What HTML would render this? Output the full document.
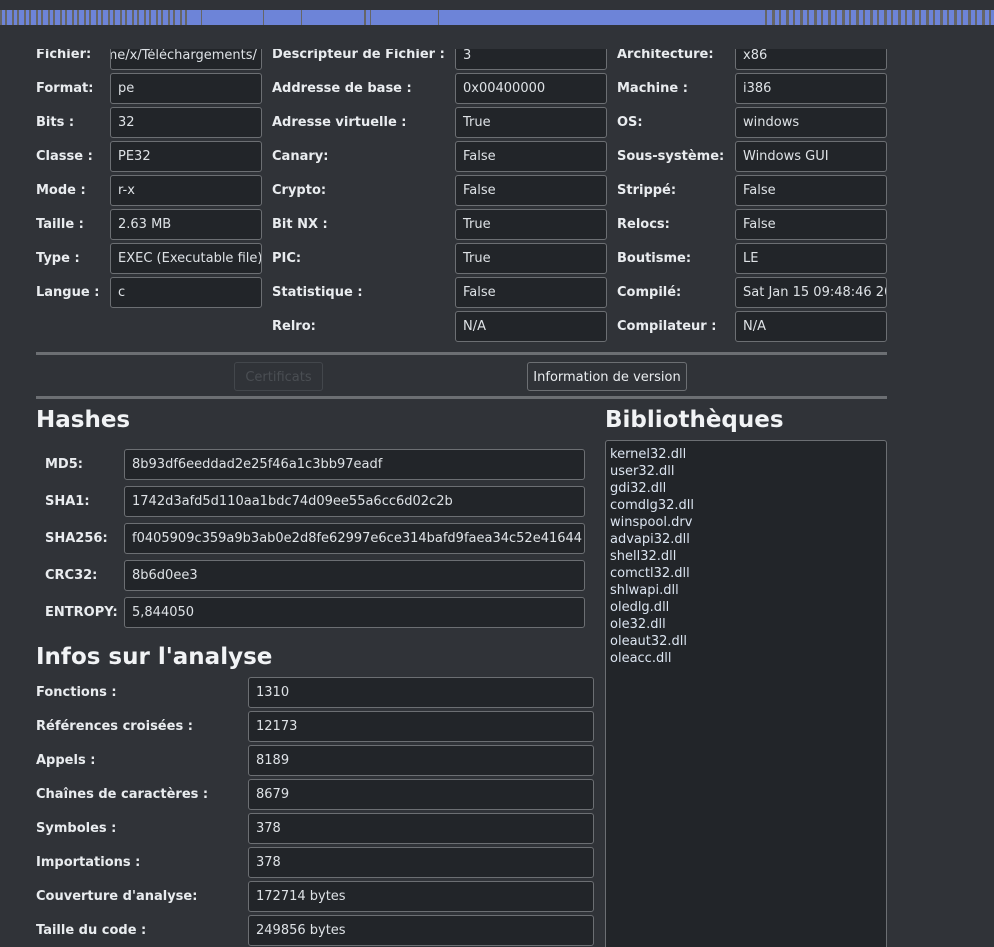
<!DOCTYPE html>
<html><head><meta charset="utf-8"><style>
*{margin:0;padding:0;box-sizing:border-box}
html,body{width:994px;height:947px;overflow:hidden}
body{background:#303338;font-family:"DejaVu Sans","Liberation Sans",sans-serif;font-size:13px;color:#dee2e6;position:relative}
.bar{position:absolute;left:0;top:10px;width:994px;height:15px;background:#6d84d8;z-index:3}
.s{position:absolute;top:10px;height:15px;background:#666;z-index:4}
.cover{position:absolute;left:0;top:0;width:994px;height:49px;background:#303338;z-index:2}
.l{position:absolute;font-weight:bold;color:#e9ecef;white-space:nowrap;line-height:16px}
.i{position:absolute;height:31px;background:#222529;border:1px solid #6c6f73;border-radius:3px;padding:0 7px;line-height:29px;white-space:nowrap;overflow:hidden;color:#dee2e6}
.hr{position:absolute;left:36px;width:851px;height:3px;background:#6c6f73}
.btn{position:absolute;height:29px;border:1px solid #6c6f73;border-radius:3px;line-height:27px;text-align:center;white-space:nowrap}
h2{position:absolute;font-size:23px;font-weight:bold;color:#f1f3f5;white-space:nowrap}
.libs{position:absolute;left:605px;top:440px;width:282px;height:520px;background:#222529;border:1px solid #6c6f73;border-radius:3px;padding:5px 4px;line-height:17px;color:#dbe4f0}
</style></head><body>
<div class="cover"></div>
<div class="bar"></div>
<div class="s" style="left:0;width:190px;background:repeating-linear-gradient(90deg,#666 0 2px,#6d84d8 2px 5px,#666 5px 7px,#6d84d8 7px 12px)"></div>
<div class="s" style="left:201px;width:1px"></div>
<div class="s" style="left:263px;width:1px"></div>
<div class="s" style="left:301px;width:1px"></div>
<div class="s" style="left:364px;width:2px"></div>
<div class="s" style="left:370px;width:1px"></div>
<div class="s" style="left:438px;width:1px"></div>
<div class="s" style="left:765px;width:229px;background:repeating-linear-gradient(90deg,#666 0 2px,#6d84d8 2px 7px,#666 7px 10px,#6d84d8 10px 14px)"></div>

<div class="l" style="left:36px;top:47px">Fichier:</div><div class="i" style="left:110px;top:39px;width:152px;padding-top:1px"><span style="margin-left:-34px">/home/x/Téléchargements/</span></div>
<div class="l" style="left:36px;top:81px">Format:</div><div class="i" style="left:110px;top:73px;width:152px">pe</div>
<div class="l" style="left:36px;top:115px">Bits :</div><div class="i" style="left:110px;top:107px;width:152px">32</div>
<div class="l" style="left:36px;top:149px">Classe :</div><div class="i" style="left:110px;top:141px;width:152px">PE32</div>
<div class="l" style="left:36px;top:183px">Mode :</div><div class="i" style="left:110px;top:175px;width:152px">r-x</div>
<div class="l" style="left:36px;top:217px">Taille :</div><div class="i" style="left:110px;top:209px;width:152px">2.63 MB</div>
<div class="l" style="left:36px;top:251px">Type :</div><div class="i" style="left:110px;top:243px;width:152px">EXEC (Executable file)</div>
<div class="l" style="left:36px;top:285px">Langue :</div><div class="i" style="left:110px;top:277px;width:152px">c</div>

<div class="l" style="left:272px;top:47px">Descripteur de Fichier :</div><div class="i" style="left:455px;top:39px;width:152px;padding-top:1px">3</div>
<div class="l" style="left:272px;top:81px">Addresse de base :</div><div class="i" style="left:455px;top:73px;width:152px">0x00400000</div>
<div class="l" style="left:272px;top:115px">Adresse virtuelle :</div><div class="i" style="left:455px;top:107px;width:152px">True</div>
<div class="l" style="left:272px;top:149px">Canary:</div><div class="i" style="left:455px;top:141px;width:152px">False</div>
<div class="l" style="left:272px;top:183px">Crypto:</div><div class="i" style="left:455px;top:175px;width:152px">False</div>
<div class="l" style="left:272px;top:217px">Bit NX :</div><div class="i" style="left:455px;top:209px;width:152px">True</div>
<div class="l" style="left:272px;top:251px">PIC:</div><div class="i" style="left:455px;top:243px;width:152px">True</div>
<div class="l" style="left:272px;top:285px">Statistique :</div><div class="i" style="left:455px;top:277px;width:152px">False</div>
<div class="l" style="left:272px;top:319px">Relro:</div><div class="i" style="left:455px;top:311px;width:152px">N/A</div>

<div class="l" style="left:617px;top:47px">Architecture:</div><div class="i" style="left:735px;top:39px;width:152px;padding-top:1px">x86</div>
<div class="l" style="left:617px;top:81px">Machine :</div><div class="i" style="left:735px;top:73px;width:152px">i386</div>
<div class="l" style="left:617px;top:115px">OS:</div><div class="i" style="left:735px;top:107px;width:152px">windows</div>
<div class="l" style="left:617px;top:149px">Sous-système:</div><div class="i" style="left:735px;top:141px;width:152px">Windows GUI</div>
<div class="l" style="left:617px;top:183px">Strippé:</div><div class="i" style="left:735px;top:175px;width:152px">False</div>
<div class="l" style="left:617px;top:217px">Relocs:</div><div class="i" style="left:735px;top:209px;width:152px">False</div>
<div class="l" style="left:617px;top:251px">Boutisme:</div><div class="i" style="left:735px;top:243px;width:152px">LE</div>
<div class="l" style="left:617px;top:285px">Compilé:</div><div class="i" style="left:735px;top:277px;width:152px">Sat Jan 15 09:48:46 2022</div>
<div class="l" style="left:617px;top:319px">Compilateur :</div><div class="i" style="left:735px;top:311px;width:152px">N/A</div>

<div class="hr" style="top:352px"></div>
<div class="btn" style="left:234px;top:362px;width:89px;color:#4a4e53;border-color:#43474c;line-height:29px">Certificats</div>
<div class="btn" style="left:527px;top:362px;width:160px;color:#e9ecef;line-height:29px">Information de version</div>
<div class="hr" style="top:396px"></div>

<h2 style="left:36px;top:407px">Hashes</h2>
<h2 style="left:605px;top:407px">Bibliothèques</h2>

<div class="l" style="left:45px;top:457px">MD5:</div><div class="i" style="left:124px;top:449px;width:461px">8b93df6eeddad2e25f46a1c3bb97eadf</div>
<div class="l" style="left:45px;top:494px">SHA1:</div><div class="i" style="left:124px;top:486px;width:461px">1742d3afd5d110aa1bdc74d09ee55a6cc6d02c2b</div>
<div class="l" style="left:45px;top:531px">SHA256:</div><div class="i" style="left:124px;top:523px;width:461px">f0405909c359a9b3ab0e2d8fe62997e6ce314bafd9faea34c52e41644</div>
<div class="l" style="left:45px;top:568px">CRC32:</div><div class="i" style="left:124px;top:560px;width:461px">8b6d0ee3</div>
<div class="l" style="left:45px;top:605px">ENTROPY:</div><div class="i" style="left:124px;top:597px;width:461px">5,844050</div>

<h2 style="left:36px;top:644px">Infos sur l'analyse</h2>
<div class="l" style="left:36px;top:685px">Fonctions :</div><div class="i" style="left:248px;top:677px;width:346px">1310</div>
<div class="l" style="left:36px;top:719px">Références croisées :</div><div class="i" style="left:248px;top:711px;width:346px">12173</div>
<div class="l" style="left:36px;top:753px">Appels :</div><div class="i" style="left:248px;top:745px;width:346px">8189</div>
<div class="l" style="left:36px;top:787px">Chaînes de caractères :</div><div class="i" style="left:248px;top:779px;width:346px">8679</div>
<div class="l" style="left:36px;top:821px">Symboles :</div><div class="i" style="left:248px;top:813px;width:346px">378</div>
<div class="l" style="left:36px;top:855px">Importations :</div><div class="i" style="left:248px;top:847px;width:346px">378</div>
<div class="l" style="left:36px;top:889px">Couverture d'analyse:</div><div class="i" style="left:248px;top:881px;width:346px">172714 bytes</div>
<div class="l" style="left:36px;top:923px">Taille du code :</div><div class="i" style="left:248px;top:915px;width:346px">249856 bytes</div>

<div class="libs">kernel32.dll<br>user32.dll<br>gdi32.dll<br>comdlg32.dll<br>winspool.drv<br>advapi32.dll<br>shell32.dll<br>comctl32.dll<br>shlwapi.dll<br>oledlg.dll<br>ole32.dll<br>oleaut32.dll<br>oleacc.dll</div>
</body></html>
